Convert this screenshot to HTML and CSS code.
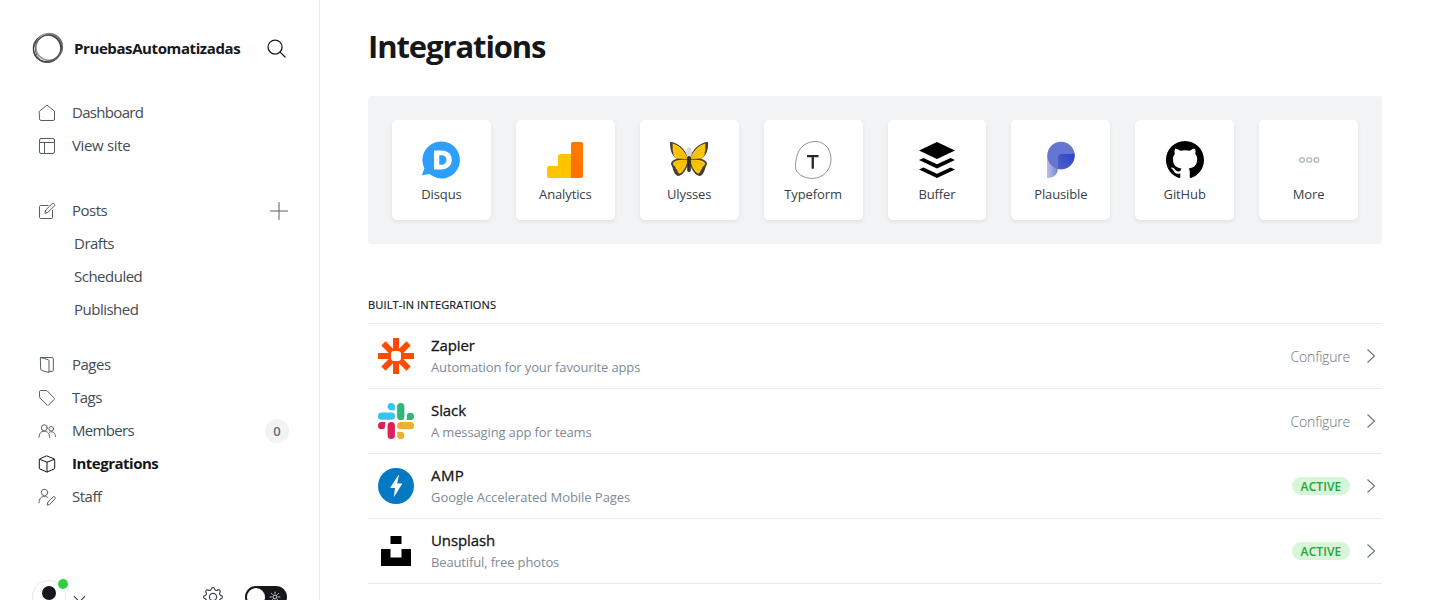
FILE: index.html
```html
<!DOCTYPE html>
<html lang="en">
<head>
<meta charset="utf-8">
<title>Integrations</title>
<link rel="stylesheet" href="styles.css">
</head>
<body>
<div class="app">
  <aside class="sidebar">
    <header class="site">
      <svg class="site-logo" viewBox="0 0 32 32" fill="none"><circle cx="15.200" cy="16.500" r="13.700" stroke="#444" stroke-width="1.500"/><circle cx="17" cy="15" r="13.300" stroke="#999" stroke-width="1.800"/><ellipse cx="16.800" cy="15.500" rx="13" ry="14.600" stroke="#666" stroke-width=".9" transform="rotate(35 16 16)"/><ellipse cx="15.400" cy="16" rx="14.400" ry="12.700" stroke="#444" stroke-width=".9" transform="rotate(-30 16 16)"/></svg>
      <span class="site-name"><span>PruebasAutomatizadas</span></span>
      <svg class="search" viewBox="0 0 20 20" fill="none" stroke="#15171a" stroke-width="1.300" stroke-linecap="round"><circle cx="8.500" cy="8.500" r="7.400"/><path d="M13.800 13.800 19 19"/></svg>
    </header>

    <nav class="menu">
      <ul>
        <li><svg viewBox="0 0 18 18"><path d="M1.500 7.200 9 1l7.500 6.200V15a1.500 1.500 0 0 1-1.500 1.500H3A1.500 1.500 0 0 1 1.500 15z"/></svg><span class="tight">Dashboard</span></li>
        <li><svg viewBox="0 0 18 18"><rect x="1.500" y="1.500" width="15" height="15" rx="1.500"/><path d="M1.500 5.500h15M6.500 5.500v11"/></svg><span class="loose">View site</span></li>
      </ul>
      <ul>
        <li><svg viewBox="0 0 18 18"><path d="M10 3.500H2.700a1.200 1.200 0 0 0-1.200 1.200v10.600a1.200 1.200 0 0 0 1.200 1.200h10.600a1.200 1.200 0 0 0 1.200-1.200V8.500M7 11l.7-3 6.600-6.500c1.200-.9 3.200 1 2.200 2.200L10 10.300z"/></svg><span>Posts</span>
          <svg class="plus" viewBox="0 0 18 18"><path d="M9 .5v17M.5 9h17"/></svg></li>
        <li class="sub"><span>Drafts</span></li>
        <li class="sub"><span>Scheduled</span></li>
        <li class="sub"><span>Published</span></li>
      </ul>
      <ul>
        <li><svg viewBox="0 0 18 18"><path d="M2.700 1.500 10 3.600c.7.200 1 .6 1 1.300v11.600l-7.300-2c-.7-.2-1-.6-1-1.200zM2.700 1.500H14c.8 0 1.300.5 1.300 1.200v11.600c0 .7-.5 1.100-1.300 1.100h-3"/></svg><span>Pages</span></li>
        <li><svg viewBox="0 0 18 18"><path d="M1.500 2.500c0-.6.400-1 1-1h5.700c.5 0 .9.200 1.200.5l6.700 7c.5.500.5 1 0 1.500l-5.400 5.500c-.5.500-1 .5-1.500 0L2 9.200a1.500 1.500 0 0 1-.5-1z"/></svg><span>Tags</span></li>
        <li><svg viewBox="0 0 18 18"><circle cx="6.300" cy="5.800" r="3"/><path d="M1 15.300c0-4 2-6 5.300-6s5.300 2 5.300 6"/><circle cx="13.200" cy="6.800" r="2.300"/><path d="M11.600 10.200c3.300-1.600 5.700.8 5.900 4.300"/></svg><span class="tight">Members</span><span class="count">0</span></li>
        <li class="current"><svg viewBox="0 0 18 18"><path d="m9 1 7 2.800c.4.200.7.500.7 1v8.400c0 .4-.2.700-.7.900L9 17l-7-2.900c-.5-.2-.7-.5-.7-.9V4.800c0-.5.300-.8.700-1zM1.600 4.300 9 7.200l7.400-2.900M9 7.200V17"/></svg><span>Integrations</span></li>
        <li><svg viewBox="0 0 18 18"><circle cx="6.500" cy="4.500" r="3.200"/><path d="M1 14.800c.1-4.300 2.200-6.400 5.500-6.400 1.500 0 2.700.5 3.500 1.300M9.300 16.800l.6-2.800 5.300-5.200c1.200-.8 2.700.7 1.900 1.900L12 16.200z"/></svg><span>Staff</span></li>
      </ul>
    </nav>

    <footer class="account">
      <span class="avatar"><svg viewBox="0 0 34 34"><circle cx="17" cy="13" r="7"/><path d="M5 34c0-9 5-12 12-12s12 3 12 12z"/></svg><i class="online"></i></span>
      <svg class="caret" viewBox="0 0 14 8"><path d="m1 1 6 6 6-6"/></svg>
      <svg class="gear" viewBox="0 0 24 24"><path d="M9.700 3 10.400 1.600a1.800 1.800 0 0 1 3.200 0L14.300 3c.5 1 1.500 1.400 2.500 1l1.600-.5a1.800 1.800 0 0 1 2.200 2.200L20 7.300c-.3 1 .1 2 1 2.500l1.400.7a1.700 1.700 0 0 1 0 3L21 14.300c-.9.500-1.300 1.500-1 2.500l.6 1.500a1.800 1.800 0 0 1-2.200 2.200l-1.600-.5c-1-.4-2 0-2.500 1l-.7 1.400a1.800 1.800 0 0 1-3.200 0L9.700 21c-.5-1-1.500-1.400-2.500-1l-1.600.5a1.800 1.800 0 0 1-2.200-2.200l.6-1.500c.3-1-.1-2-1-2.500l-1.400-.8a1.700 1.700 0 0 1 0-3L3 9.800c.9-.5 1.300-1.500 1-2.500l-.6-1.600a1.800 1.800 0 0 1 2.200-2.200l1.600.5c1 .4 2 0 2.500-1z"/><circle cx="12" cy="12" r="4.300"/></svg>
      <span class="night"><i></i><svg viewBox="0 0 14 14"><circle cx="7" cy="7" r="2.300"/><path d="M7 .8v2.400M7 10.800v2.400M.8 7h2.400M10.800 7h2.400M2.600 2.600l1.700 1.700M9.700 9.700l1.700 1.700M2.600 11.400l1.700-1.700M9.700 4.300l1.700-1.700"/></svg></span>
    </footer>
  </aside>

  <main class="content">
    <h1><span>Integrations</span></h1>

    <section class="apps">
      <a class="app-tile"><svg viewBox="0 0 38 38"><path fill="#2e9fff" d="M19.500.5a18.500 18.500 0 1 1-12 32.600L-.2 34.300l2.600-7A18.500 18.500 0 0 1 19.500.5z"/><path fill="#fff" fill-rule="evenodd" d="M12 9.500h7.500c6.300 0 10.300 3.500 10.300 9.300S25.700 28.400 19.300 28.400H12zM17.300 14.200v9.600h2.200c3 0 5-1.600 5-4.800s-2-4.800-5-4.800z"/></svg><span>Disqus</span></a>
      <a class="app-tile"><svg viewBox="0 0 38 38"><path fill="#ffc400" d="M25 13H14.500a2.500 2.500 0 0 0-2.500 2.500V25H3.500A2.500 2.500 0 0 0 1 27.500v7A2.500 2.500 0 0 0 3.500 37H25z"/><rect x="25" y="1" width="12" height="36" rx="2.500" fill="#ff7200"/><path fill="#ff7900" d="M25 13V3.500A2.500 2.500 0 0 1 27.500 1h7A2.500 2.500 0 0 1 37 3.500V25z"/><path fill="#ff7200" d="M25 30h2v7h-2z"/></svg><span>Analytics</span></a>
      <a class="app-tile"><svg viewBox="0 0 38 38"><path fill="#403f3c" d="M0 1c8 0 16 8 18.300 16.500L19 19l.7-1.500C22 9 30 1 38 1c.5 6-1 14-7 16.800 4 1.200 6.500 3 5.800 6-2 2.500-2 9-6 11-5 1.200-9-6-11.800-13C16.200 28.800 12.200 36 7.200 34.800c-4-2-4-8.500-6-11-.7-3 1.800-4.800 5.800-6C1 15 0 7 0 1z"/><path fill="#ffc60a" d="M2.500 2.500c6 1 13 8 15.300 15.600L6 17.500C4 15 2.500 13 3.500 12 2 9 3 6 2.500 2.500zm33 0c-6 1-13 8-15.300 15.600l11.800-.6c2-2.500 3.500-4.500 2.500-5.500 1.500-3 .5-6 1-9.500zM17.600 18.700C17 25 12.500 32.500 9.500 32.500c-2 0-1.500-4-3.500-4.500 0-3-4-4-3-6 2-3.500 8-3.500 14.600-3.300zm2.800 0c.6 6.300 5.100 13.800 8.100 13.800 2 0 1.500-4 3.500-4.500 0-3 4-4 3-6-2-3.500-8-3.500-14.600-3.300z"/><path stroke="#bf9200" stroke-width=".4" fill="none" d="m17 17.500-10-10m10 10L6 12m11 7.500L5 23m12-3-8 10m12-12.500L31 7.500m-10 10L32 12m-11 7.500L33 23m-12-3 8 10"/><path fill="#d8d8d8" d="M19 6c3 2 3.500 6 1.700 10h-3.400C15.500 12 16 8 19 6z"/><rect x="17.200" y="15" width="3.600" height="16" rx="1.800" fill="#2f2f2f"/></svg><span>Ulysses</span></a>
      <a class="app-tile"><svg viewBox="0 0 38 38"><path fill="#fff" stroke="#777" stroke-width=".8" d="M19 .6c10.500-1.500 18 7 18 17.400 0 11-8 19.400-18.500 19.400C9 37.400 1.500 32 1.500 26 1.500 13 6 2.500 19 .6z"/><path fill="#262627" d="M13 14h11.500v2.200h-4.600v11.600h-2.300V16.200H13z"/></svg><span>Typeform</span></a>
      <a class="app-tile"><svg viewBox="0 0 38 38"><path d="m19 1 18 8.500L19 18 1 9.500zM1 19l4.500-2L19 23.300 32.500 17l4.500 2-18 8.500zM1 28.500l4.500-2L19 32.800l13.500-6.300 4.500 2L19 37z"/></svg><span>Buffer</span></a>
      <a class="app-tile"><svg viewBox="0 0 38 38"><defs><linearGradient id="stem"><stop stop-color="#b9c0ea"/><stop offset="1" stop-color="#7681d4"/></linearGradient><linearGradient id="bowl" x1="1" y1="0" x2="0" y2="1"><stop stop-color="#2b42d0"/><stop offset="1" stop-color="#5360c2"/></linearGradient></defs><path fill="url(#stem)" d="M5 15h11v12c0 6-4 10-11 10z"/><circle cx="19" cy="14.500" r="13.700" fill="#6675d1"/><path fill="url(#bowl)" d="M32.500 12.800A13.800 13.800 0 0 1 16 28V17a4 4 0 0 1 4-4h8.500c2 0 3.500-1 4-.2z"/></svg><span>Plausible</span></a>
      <a class="app-tile"><svg viewBox="0 0 16 16"><path d="M8 0C3.580 0 0 3.580 0 8c0 3.540 2.290 6.530 5.470 7.590.4.070.55-.17.55-.38 0-.19-.01-.82-.01-1.490-2.010.37-2.530-.49-2.690-.94-.09-.23-.48-.94-.82-1.130-.28-.15-.68-.52-.01-.53.63-.01 1.080.58 1.230.82.72 1.210 1.870.87 2.330.66.070-.52.280-.87.510-1.070-1.780-.2-3.640-.89-3.640-3.950 0-.87.310-1.590.82-2.150-.08-.2-.36-1.020.08-2.120 0 0 .67-.21 2.200.82.640-.18 1.320-.27 2-.27s1.360.09 2 .27c1.530-1.040 2.200-.82 2.200-.82.440 1.100.16 1.920.08 2.120.51.560.82 1.270.82 2.150 0 3.070-1.870 3.750-3.650 3.950.29.250.54.730.54 1.480 0 1.070-.01 1.930-.01 2.200 0 .21.150.46.550.38A8.010 8.010 0 0 0 16 8c0-4.420-3.580-8-8-8z"/></svg><span>GitHub</span></a>
      <a class="app-tile"><svg viewBox="0 0 38 38" fill="none" stroke="#aeb7c1" stroke-width="1.300"><circle cx="12" cy="19" r="2.400"/><circle cx="19.200" cy="19" r="2.400"/><circle cx="26.400" cy="19" r="2.400"/></svg><span>More</span></a>
    </section>

    <h2><span>Built-in integrations</span></h2>
    <section class="list">
      <div class="row">
        <svg class="logo" viewBox="0 0 36 36"><g stroke="#ff4a00" stroke-width="6"><path d="M18 0v36M0 18h36M5.400 5.400l25.200 25.200M30.600 5.400 5.400 30.600"/></g><rect x="13" y="13" width="10" height="10" rx="3" fill="#fff"/></svg>
        <div class="text"><h3>Zapier</h3><p>Automation for your favourite apps</p></div>
        <span class="configure">Configure</span><svg class="go" viewBox="0 0 10 16"><path d="m1.500 1.500 7 6.500-7 6.500"/></svg>
      </div>
      <div class="row">
        <svg class="logo" viewBox="0 0 36 36"><path fill="#36c5f0" d="M13.200 0a3.700 3.700 0 0 1 3.700 3.700v3.500h-3.700a3.600 3.600 0 0 1 0-7.200z"/><rect y="9.600" width="17" height="7.200" rx="3.600" fill="#36c5f0"/><rect x="19.100" width="7.300" height="17" rx="3.600" fill="#2eb67d"/><path fill="#2eb67d" d="M28.800 17v-3.600a3.600 3.600 0 1 1 3.600 3.600z"/><rect x="19.100" y="19.100" width="17" height="7.200" rx="3.600" fill="#ecb22e"/><path fill="#ecb22e" d="M19.100 28.800h3.600a3.600 3.600 0 1 1-3.600 3.600z"/><rect x="9.600" y="19.100" width="7.300" height="17" rx="3.600" fill="#e01e5a"/><path fill="#e01e5a" d="M7.200 19.100v3.600a3.600 3.600 0 1 1-3.600-3.600z"/></svg>
        <div class="text"><h3>Slack</h3><p>A messaging app for teams</p></div>
        <span class="configure">Configure</span><svg class="go" viewBox="0 0 10 16"><path d="m1.500 1.500 7 6.500-7 6.500"/></svg>
      </div>
      <div class="row">
        <svg class="logo" viewBox="0 0 36 36"><circle cx="18" cy="18" r="18" fill="#0379c4"/><path fill="#fff" d="M20.500 7 12 20h5l-1.200 9.200L24.400 15.500h-5.200L21 7z"/></svg>
        <div class="text"><h3 class="wide">AMP</h3><p class="wide">Google Accelerated Mobile Pages</p></div>
        <span class="active">Active</span><svg class="go" viewBox="0 0 10 16"><path d="m1.500 1.500 7 6.500-7 6.500"/></svg>
      </div>
      <div class="row">
        <svg class="logo" viewBox="0 0 36 36"><path d="M12.500 3h11v8h-11zM3 16h9.500v8.500h11V16H33v17H3z"/></svg>
        <div class="text"><h3>Unsplash</h3><p>Beautiful, free photos</p></div>
        <span class="active">Active</span><svg class="go" viewBox="0 0 10 16"><path d="m1.500 1.500 7 6.500-7 6.500"/></svg>
      </div>
    </section>
  </main>
</div>
</body>
</html>
```
FILE: styles.css
```css
* { box-sizing: border-box; }
body { margin: 0; color: #15171a; background: #fff; font-family: "Open Sans", "Noto Sans", sans-serif; }
h1, h2, h3, p, ul { margin: 0; padding: 0; }
svg { display: block; flex: none; overflow: visible; }
.app { display: flex; height: 600px; overflow: hidden; }

.sidebar { width: 320px; flex: none; border-right: 1px solid #e6e9eb; padding: 28px 31px 0 32px; }
.site { display: flex; align-items: center; height: 40px; }
.site-logo { width: 32px; height: 32px; }
.site-name { flex: 1; margin-left: 10px; font-size: 15px; font-weight: 700; letter-spacing: -.4px; }
.search { width: 19px; height: 19px; margin-right: 2px; }

.menu { padding-top: 28px; }
.menu ul { list-style: none; margin-bottom: 32px; }
.menu ul + ul { margin-bottom: 22px; }
.menu li { display: flex; align-items: center; height: 33px; padding-left: 6px; font-size: 15px; letter-spacing: -.5px; color: #434b53; }
.menu li > svg { width: 18px; height: 18px; fill: none; stroke: #53606b; stroke-width: 1; stroke-linejoin: round; stroke-linecap: round; }
.menu li > span:not(.count) { padding-bottom: 2px; }
.menu li > svg + span { margin-left: 16px; }
.menu .tight { letter-spacing: -.68px; }
.menu .loose { letter-spacing: -.35px; }
.menu li.sub { padding-left: 42px; }
.menu li.current { font-weight: 700; color: #15171a; }
.menu li.current > svg { stroke: #15171a; }
.menu li > .plus { margin-left: auto; }
.count { margin-left: auto; margin-right: -1px; width: 24px; height: 24px; border-radius: 50%; background: #f1f3f4; font-size: 13px; font-weight: 600; line-height: 24px; text-align: center; letter-spacing: 0; color: #626d79; }

.account { display: flex; align-items: center; height: 34px; margin-top: 67px; }
.avatar { position: relative; width: 34px; height: 34px; border: 1px solid #e6e9eb; border-radius: 50%; }
.avatar svg { width: 34px; height: 34px; margin: -1px; fill: #15171a; }
.online { position: absolute; top: -2px; right: -3px; width: 10px; height: 10px; border-radius: 50%; background: #30cf43; }
.caret { width: 13px; height: 8px; margin: 4px 0 0 7px; fill: none; stroke: #394047; stroke-width: 1.2; }
.gear { width: 20px; height: 20px; margin-left: auto; fill: none; stroke: #394047; stroke-width: 1.4; stroke-linejoin: round; }
.night { display: flex; align-items: center; width: 42px; height: 22px; margin-left: 22px; margin-right: 1px; padding: 0 6px 0 2px; border-radius: 11px; background: #15171a; }
.night i { width: 18px; height: 18px; border-radius: 50%; background: #fff; }
.night svg { width: 12px; height: 12px; margin-left: auto; fill: none; stroke: #fff; stroke-width: 1; }

.content { flex: 1; padding: 24px 48px 0; }
h1 { height: 48px; line-height: 45px; font-size: 31px; font-weight: 700; letter-spacing: -1.1px; }
.apps { display: grid; grid-template-columns: repeat(8, 1fr); gap: 25px; height: 148px; margin-top: 24px; padding: 24px; border-radius: 3px; background: #f1f3f5; }
.app-tile { display: flex; flex-direction: column; align-items: center; height: 100px; padding-top: 21px; border-radius: 5px; background: #fff; box-shadow: 0 2px 4px rgba(0, 0, 0, .07); font-size: 13px; line-height: 18px; letter-spacing: -.12px; color: #394047; }
.app-tile svg { width: 38px; height: 38px; }
.app-tile span { margin-top: 6px; }
h2 { margin-top: 53px; height: 26px; line-height: 16px; font-size: 11px; font-weight: 400; text-transform: uppercase; letter-spacing: .15px; -webkit-text-stroke: .2px; }
.list { border-top: 1px solid #e9ecee; }
.row { display: flex; align-items: center; height: 65px; padding: 0 6px 0 10px; border-bottom: 1px solid #e9ecee; }
.logo { width: 36px; height: 36px; }
.text { flex: 1; margin-left: 17px; }
h3 { margin-bottom: 2px; font-size: 15px; line-height: 20px; font-weight: 500; letter-spacing: -.1px; -webkit-text-stroke: .3px; }
h3.wide { letter-spacing: .4px; }
.text p { font-size: 13px; line-height: 20px; letter-spacing: -.14px; color: #7c8b9a; }
.text p.wide { letter-spacing: -.05px; }
.configure { font-size: 14px; font-weight: 300; letter-spacing: -.2px; color: #667482; }
.active { width: 58px; height: 18px; border-radius: 9px; background: #d6f5d9; font-size: 12px; font-weight: 600; line-height: 19px; letter-spacing: .1px; text-align: center; text-transform: uppercase; color: #26a438; }
.go { width: 10px; height: 16px; margin-left: 16px; fill: none; stroke: #667482; stroke-width: 1.1; }
```
